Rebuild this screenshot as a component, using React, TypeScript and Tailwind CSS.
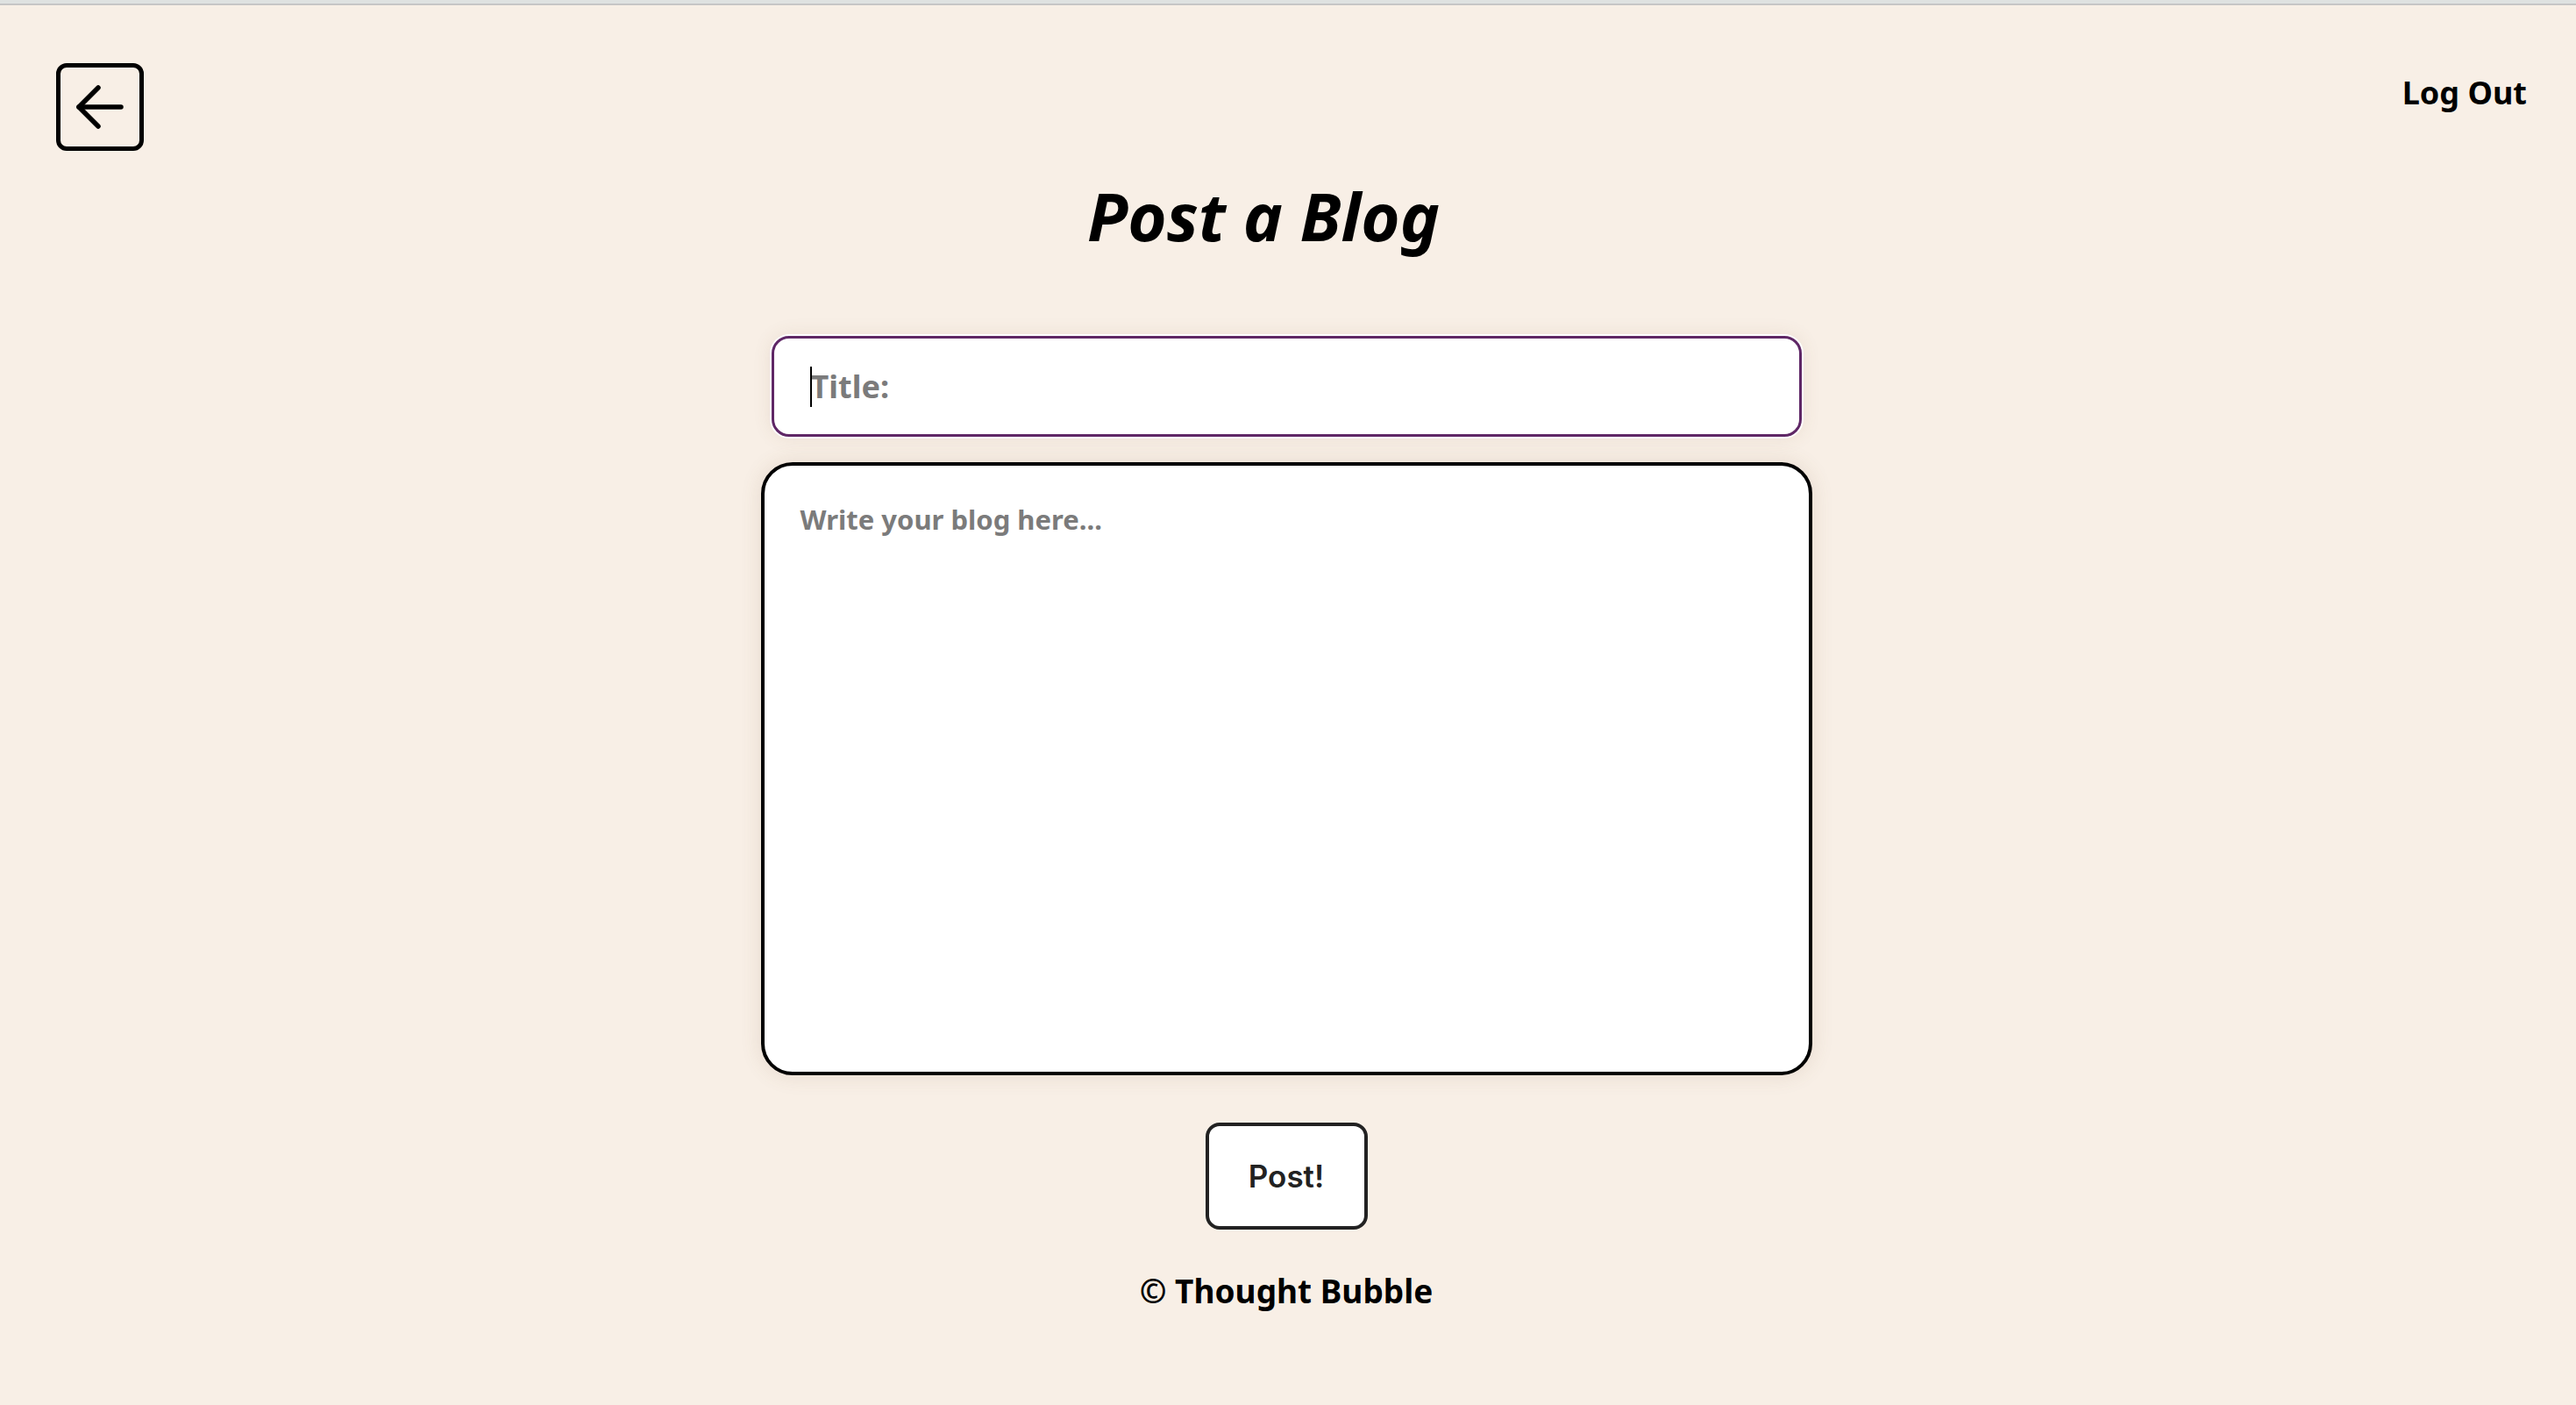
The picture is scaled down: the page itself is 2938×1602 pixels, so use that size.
import React from "react";

export default function App() {
  const sans = { fontFamily: '"Noto Sans", "Open Sans", sans-serif' };
  return (
    <div className="min-h-[1602px] w-full bg-[#f8efe6]" style={sans}>
      <div className="h-[4px] bg-[#dfe2e1]" />
      <div className="h-[2px] bg-[#c6c6c6]" />
      <div className="flex items-start justify-between pl-[64px] pr-[56px] pt-[66px]">
        <button className="flex h-[100px] w-[100px] items-center justify-center rounded-[12px] border-[5px] border-black bg-transparent">
          <svg width="60" height="60" viewBox="0 0 60 60" fill="none" stroke="black" strokeWidth="5.5" strokeLinecap="round" strokeLinejoin="round">
            <path d="M6 30 H 54" />
            <path d="M28 8 L 6 30 L 28 52" />
          </svg>
        </button>
        <div className="mt-[16px] text-[36px] font-bold leading-none text-black">Log Out</div>
      </div>
      <div className="flex flex-col items-center pr-[4px]">
        <h1 className="mr-[52px] mt-[36px] text-[76px] font-bold italic leading-none text-black">Post a Blog</h1>
        <div className="relative mt-[99px] w-[1175px]">
          <input
            placeholder="Title:"
            className="h-[115px] w-full rounded-[20px] border-[3px] border-[#5f2766] bg-white px-[42px] text-[36px] font-bold text-black shadow-[0_0_0_2px_#ffffff,0_0_22px_rgba(120,90,60,0.12)] outline-none placeholder:text-[#7b7b7b]"
            style={sans}
          />
          <span className="absolute left-[44px] top-[35px] h-[46px] w-[2px] bg-black" />
        </div>
        <textarea
          placeholder="Write your blog here..."
          className="mt-[29px] h-[699px] w-[1199px] resize-none rounded-[36px] border-[4px] border-black bg-white px-[41px] pt-[42px] text-[31px] font-bold leading-tight text-black shadow-[0_0_24px_rgba(120,90,60,0.14)] outline-none placeholder:text-[#7b7b7b]"
          style={sans}
        />
        <button
          className="mt-[54px] flex h-[122px] w-[185px] items-center justify-center rounded-[16px] border-[4px] border-[#222] bg-white text-[35px] font-semibold text-[#222]"
          style={{ fontFamily: 'Inter, "Liberation Sans", sans-serif' }}
        >
          Post!
        </button>
        <div className="mt-[51px] text-[37px] font-bold leading-none text-black">© Thought Bubble</div>
      </div>
    </div>
  );
}
